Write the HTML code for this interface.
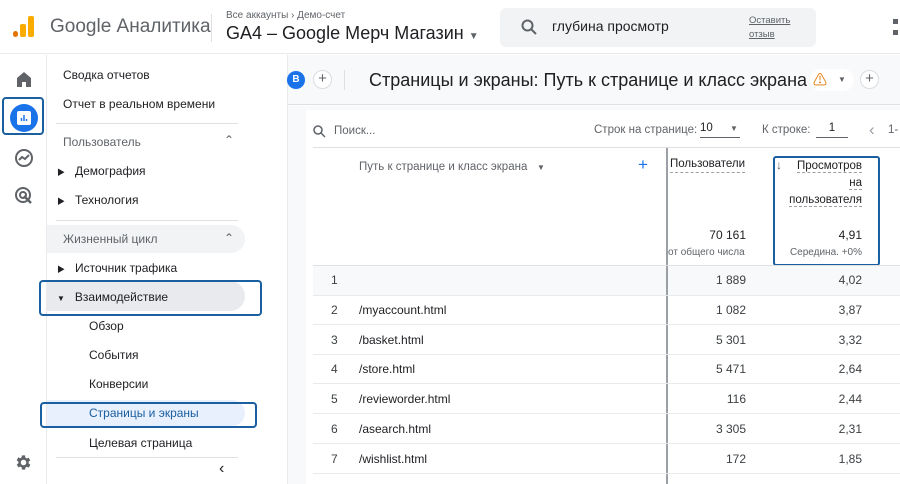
<!DOCTYPE html>
<html><head><meta charset="utf-8"><style>
*{box-sizing:border-box;margin:0;padding:0}
body{width:900px;height:484px;overflow:hidden;background:#fff;font-family:"Liberation Sans","Noto Sans CJK SC",sans-serif;color:#202124;position:relative}
.a{position:absolute;white-space:nowrap}
.nav{font-size:12px;color:#202124}
.t{font-size:12px}
.n{color:#3c4043}
</style></head><body>
<div class="a" style="left:0;top:0;width:900px;height:54px;border-bottom:1px solid #e8eaed;background:#fff"></div>
<svg class="a" style="left:13px;top:15px" width="22" height="24"><rect x="0" y="16" width="5" height="6" rx="2.5" fill="#e37400"/><rect x="7" y="9" width="6" height="13" rx="2" fill="#f9ab00"/><rect x="15" y="1" width="6" height="21" rx="2" fill="#f9ab00"/></svg>
<div class="a" style="left:50px;top:16px;font-size:19px;color:#5f6368">Google Аналитика</div>
<div class="a" style="left:211px;top:14px;width:1px;height:28px;background:#e0e0e0"></div>
<div class="a" style="left:226px;top:10px;font-size:10px;color:#5f6368">Все аккаунты › Демо-счет</div>
<div class="a" style="left:226px;top:23px;font-size:18px;color:#202124">GA4 – Google Мерч Магазин <span style="font-size:10px;color:#5f6368">▼</span></div>
<div class="a" style="left:500px;top:8px;width:316px;height:39px;background:#f1f3f4;border-radius:6px"></div>
<svg class="a" style="left:521px;top:19px" width="16" height="16"><circle cx="6.5" cy="6.5" r="5" stroke="#5f6368" stroke-width="2" fill="none"/><path d="M10 10l5 5" stroke="#5f6368" stroke-width="2"/></svg>
<div class="a" style="left:552px;top:18px;font-size:14px">глубина просмотр</div>
<div class="a" style="left:749px;top:14px;font-size:9.5px;color:#5f6368;text-decoration:underline;line-height:14px">Оставить<br>отзыв</div>
<div class="a" style="left:893px;top:19px;width:5px;height:5px;background:#5f6368"></div>
<div class="a" style="left:893px;top:30px;width:5px;height:5px;background:#5f6368"></div>
<div class="a" style="left:46px;top:55px;width:1px;height:429px;background:#e8eaed"></div>
<svg class="a" style="left:15px;top:70px" width="18" height="18"><path d="M2 8L9 2l7 6v9h-5v-5H7v5H2z" fill="#5f6368"/></svg>
<div class="a" style="left:2px;top:97px;width:42px;height:38px;border:2px solid #1a5fa0;border-radius:4px"></div>
<div class="a" style="left:10px;top:104px;width:28px;height:28px;border-radius:50%;background:#1a73e8"></div>
<div class="a" style="left:17px;top:111px;width:14px;height:14px;background:#fff;border-radius:2px"></div>
<svg class="a" style="left:17px;top:111px" width="14" height="14"><path d="M4.5 10V7M7 10V4M9.5 10V8" stroke="#1a73e8" stroke-width="1.5"/></svg>
<svg class="a" style="left:14px;top:148px" width="20" height="20"><circle cx="10" cy="10" r="8" stroke="#5f6368" stroke-width="2" fill="none"/><path d="M5 12l3-3 3 2 4-4" stroke="#5f6368" stroke-width="2" fill="none"/></svg>
<svg class="a" style="left:14px;top:186px" width="20" height="20"><circle cx="9" cy="9" r="7" stroke="#5f6368" stroke-width="2" fill="none"/><circle cx="9" cy="9" r="3" stroke="#5f6368" stroke-width="2" fill="none"/><path d="M10 10l7 7" stroke="#5f6368" stroke-width="2.5"/></svg>
<svg class="a" style="left:14px;top:453px" width="19" height="19" viewBox="0 0 24 24"><path fill="#5f6368" d="M19.4 13a7.5 7.5 0 000-2l2.1-1.6-2-3.5-2.5 1a7 7 0 00-1.7-1L15 3h-4l-.4 2.6a7 7 0 00-1.7 1l-2.5-1-2 3.5L6.6 11a7.5 7.5 0 000 2l-2.1 1.6 2 3.5 2.5-1a7 7 0 001.7 1L11 21h4l.4-2.6a7 7 0 001.7-1l2.5 1 2-3.5zM13 15.5a3.5 3.5 0 110-7 3.5 3.5 0 010 7z" transform="translate(-1 0)"/></svg>
<div class="a" style="left:287px;top:55px;width:1px;height:429px;background:#e8eaed"></div>
<div class="a nav" style="left:63px;top:68px">Сводка отчетов</div>
<div class="a nav" style="left:63px;top:97px">Отчет в реальном времени</div>
<div class="a" style="left:56px;top:123px;width:182px;height:1px;background:#e0e0e0"></div>
<div class="a nav" style="left:63px;top:135px;color:#5f6368">Пользователь</div>
<div class="a" style="left:224px;top:133px;font-size:12px;color:#5f6368">⌃</div>
<div class="a nav" style="left:57px;top:164px"><span style="font-size:8px">▶</span>&nbsp;&nbsp;&nbsp;Демография</div>
<div class="a nav" style="left:57px;top:193px"><span style="font-size:8px">▶</span>&nbsp;&nbsp;&nbsp;Технология</div>
<div class="a" style="left:56px;top:220px;width:182px;height:1px;background:#e0e0e0"></div>
<div class="a" style="left:47px;top:225px;width:198px;height:28px;background:#f1f3f4;border-radius:0 14px 14px 0"></div>
<div class="a nav" style="left:63px;top:232px;color:#5f6368">Жизненный цикл</div>
<div class="a" style="left:224px;top:231px;font-size:12px;color:#5f6368">⌃</div>
<div class="a nav" style="left:57px;top:261px"><span style="font-size:8px">▶</span>&nbsp;&nbsp;&nbsp;Источник трафика</div>
<div class="a" style="left:47px;top:281px;width:198px;height:30px;background:#e8eaed;border-radius:0 15px 15px 0"></div>
<div class="a" style="left:39px;top:280px;width:223px;height:36px;border:2px solid #1a5fa0;border-radius:4px"></div>
<div class="a nav" style="left:57px;top:290px"><span style="font-size:8px">▼</span>&nbsp;&nbsp;&nbsp;Взаимодействие</div>
<div class="a nav" style="left:89px;top:319px">Обзор</div>
<div class="a nav" style="left:89px;top:348px">События</div>
<div class="a nav" style="left:89px;top:377px">Конверсии</div>
<div class="a" style="left:47px;top:400px;width:198px;height:26px;background:#e8f0fe;border-radius:0 13px 13px 0"></div>
<div class="a" style="left:40px;top:402px;width:217px;height:26px;border:2px solid #1a5fa0;border-radius:4px"></div>
<div class="a nav" style="left:89px;top:406px;color:#1a5fa0">Страницы и экраны</div>
<div class="a nav" style="left:89px;top:436px">Целевая страница</div>
<div class="a" style="left:56px;top:457px;width:182px;height:1px;background:#e0e0e0"></div>
<div class="a" style="left:219px;top:460px;font-size:16px;color:#202124">‹</div>
<div class="a" style="left:288px;top:55px;width:612px;height:50px;background:#f8f9fa;border-bottom:1px solid #e0e0e0"></div>
<div class="a" style="left:288px;top:106px;width:612px;height:378px;background:#f8f9fa"></div>
<div class="a" style="left:306px;top:110px;width:594px;height:374px;background:#fff"></div>
<div class="a" style="left:287px;top:71px;width:18px;height:18px;border-radius:50%;background:#1a73e8;color:#fff;font-size:10px;font-weight:bold;text-align:center;line-height:18px">B</div>
<div class="a" style="left:313px;top:70px;width:19px;height:19px;border-radius:50%;border:1px solid #dadce0;background:#fff;text-align:center;line-height:16px;color:#5f6368;font-size:15px">+</div>
<div class="a" style="left:344px;top:70px;width:1px;height:20px;background:#e0e0e0"></div>
<div class="a" style="left:369px;top:70px;font-size:18px;color:#202124">Страницы и экраны: Путь к странице и класс экрана</div>
<div class="a" style="left:810px;top:69px;width:44px;height:22px;border-radius:11px;background:#fff"></div>
<div class="a" style="left:813px;top:70px;font-size:14px;color:#e37400">⚠</div>
<div class="a" style="left:838px;top:75px;font-size:8px;color:#5f6368">▼</div>
<div class="a" style="left:860px;top:70px;width:19px;height:19px;border-radius:50%;border:1px solid #dadce0;background:#fff;text-align:center;line-height:16px;color:#5f6368;font-size:15px">+</div>
<svg class="a" style="left:313px;top:125px" width="13" height="13"><circle cx="5" cy="5" r="4" stroke="#5f6368" stroke-width="1.5" fill="none"/><path d="M8 8l4 4" stroke="#5f6368" stroke-width="1.5"/></svg>
<div class="a" style="left:334px;top:125px;font-size:11.5px;color:#5f6368">Поиск...</div>
<div class="a" style="left:313px;top:147px;width:587px;height:1px;background:#e0e0e0"></div>
<div class="a" style="left:594px;top:124px;font-size:11.5px;color:#5f6368">Строк на странице:</div>
<div class="a" style="left:700px;top:122px;width:40px;border-bottom:1px solid #5f6368;padding-bottom:3px;font-size:11.5px">10 <span style="font-size:8px;margin-left:14px;color:#5f6368">▼</span></div>
<div class="a" style="left:762px;top:124px;font-size:11.5px;color:#5f6368">К строке:</div>
<div class="a" style="left:816px;top:122px;width:32px;border-bottom:1px solid #5f6368;padding-bottom:3px;text-align:center;font-size:11.5px">1</div>
<div class="a" style="left:869px;top:120px;font-size:17px;color:#9aa0a6">‹</div>
<div class="a" style="left:888px;top:124px;font-size:11.5px;color:#5f6368">1-</div>
<div class="a" style="left:359px;top:161px;font-size:11.5px;color:#5f6368">Путь к странице и класс экрана &nbsp;&nbsp;<span style="font-size:8px">▼</span></div>
<div class="a" style="left:638px;top:155px;font-size:17px;color:#1a73e8">+</div>
<div class="a" style="left:666px;top:148px;width:2px;height:336px;background:#9aa0a6"></div>
<div class="a" style="left:670px;top:158px;font-size:11.5px;border-bottom:1px dashed #9aa0a6;padding-bottom:2px">Пользователи</div>
<div class="a t" style="left:700px;top:228px;width:46px;text-align:right">70 161</div>
<div class="a" style="left:668px;top:247px;font-size:10px;color:#5f6368">от общего числа</div>
<div class="a" style="left:773px;top:156px;width:107px;height:110px;border:2px solid #1a5fa0;border-radius:3px"></div>
<div class="a t" style="left:776px;top:158px;color:#5f6368">↓</div>
<div class="a" style="left:780px;top:158px;width:82px;text-align:right;line-height:17px;font-size:11.5px"><span style="border-bottom:1px dashed #9aa0a6">Просмотров</span><br><span style="border-bottom:1px dashed #9aa0a6">на</span><br><span style="border-bottom:1px dashed #9aa0a6">пользователя</span></div>
<div class="a t" style="left:810px;top:228px;width:52px;text-align:right">4,91</div>
<div class="a" style="left:780px;top:247px;width:82px;text-align:right;font-size:10px;color:#5f6368">Середина. +0%</div>
<div class="a" style="left:313px;top:265px;width:587px;height:1px;background:#e0e0e0"></div>
<div class="a" style="left:313px;top:266px;width:353px;height:29px;background:#f8f9fa"></div>
<div class="a" style="left:668px;top:266px;width:232px;height:29px;background:#f8f9fa"></div>
<div class="a t n" style="left:331px;top:273px">1</div><div class="a t n" style="left:690px;top:273px;width:56px;text-align:right">1 889</div><div class="a t n" style="left:810px;top:273px;width:52px;text-align:right">4,02</div>
<div class="a" style="left:313px;top:295px;width:587px;height:1px;background:#e8eaed"></div>
<div class="a t n" style="left:331px;top:303px">2</div><div class="a t" style="left:359px;top:303px">/myaccount.html</div><div class="a t n" style="left:690px;top:303px;width:56px;text-align:right">1 082</div><div class="a t n" style="left:810px;top:303px;width:52px;text-align:right">3,87</div>
<div class="a" style="left:313px;top:324px;width:587px;height:1px;background:#e8eaed"></div>
<div class="a t n" style="left:331px;top:333px">3</div><div class="a t" style="left:359px;top:333px">/basket.html</div><div class="a t n" style="left:690px;top:333px;width:56px;text-align:right">5 301</div><div class="a t n" style="left:810px;top:333px;width:52px;text-align:right">3,32</div>
<div class="a" style="left:313px;top:354px;width:587px;height:1px;background:#e8eaed"></div>
<div class="a t n" style="left:331px;top:362px">4</div><div class="a t" style="left:359px;top:362px">/store.html</div><div class="a t n" style="left:690px;top:362px;width:56px;text-align:right">5 471</div><div class="a t n" style="left:810px;top:362px;width:52px;text-align:right">2,64</div>
<div class="a" style="left:313px;top:383px;width:587px;height:1px;background:#e8eaed"></div>
<div class="a t n" style="left:331px;top:392px">5</div><div class="a t" style="left:359px;top:392px">/revieworder.html</div><div class="a t n" style="left:690px;top:392px;width:56px;text-align:right">116</div><div class="a t n" style="left:810px;top:392px;width:52px;text-align:right">2,44</div>
<div class="a" style="left:313px;top:413px;width:587px;height:1px;background:#e8eaed"></div>
<div class="a t n" style="left:331px;top:422px">6</div><div class="a t" style="left:359px;top:422px">/asearch.html</div><div class="a t n" style="left:690px;top:422px;width:56px;text-align:right">3 305</div><div class="a t n" style="left:810px;top:422px;width:52px;text-align:right">2,31</div>
<div class="a" style="left:313px;top:443px;width:587px;height:1px;background:#e8eaed"></div>
<div class="a t n" style="left:331px;top:452px">7</div><div class="a t" style="left:359px;top:452px">/wishlist.html</div><div class="a t n" style="left:690px;top:452px;width:56px;text-align:right">172</div><div class="a t n" style="left:810px;top:452px;width:52px;text-align:right">1,85</div>
<div class="a" style="left:313px;top:473px;width:587px;height:1px;background:#e8eaed"></div>
</body></html>
